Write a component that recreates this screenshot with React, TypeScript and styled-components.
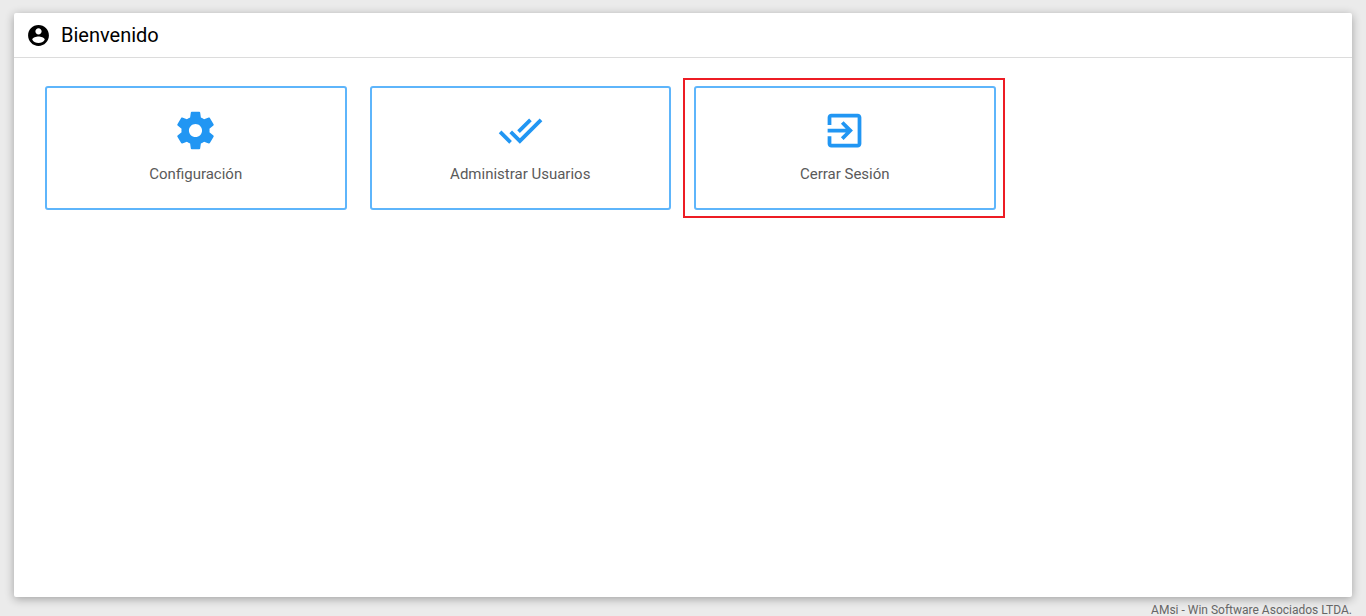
import React from "react";
import styled, { createGlobalStyle } from "styled-components";

const GlobalStyle = createGlobalStyle`
  *, *::before, *::after { box-sizing: border-box; }
  body {
    margin: 0;
    background: #ebebeb;
    color: #000;
    font-family: Roboto, "Liberation Sans", sans-serif;
  }
`;

const Page = styled.div`
  display: flex;
  flex-direction: column;
  height: 100vh;
  padding: 13px 14px 0;
  overflow: hidden;
`;

const Panel = styled.main`
  flex: 1;
  min-height: 0;
  background: #fff;
  border-radius: 2px;
  box-shadow: 0 2px 10px rgba(0, 0, 0, 0.32);
`;

const PanelHeader = styled.header`
  display: flex;
  align-items: center;
  gap: 10px;
  height: 45px;
  padding: 0 12px;
  border-bottom: 1px solid #dcdcdc;
`;

const Title = styled.h1`
  margin: 0;
  font-size: 20px;
  font-weight: 400;
  line-height: 24px;
`;

const Icon = styled.svg<{ $size: number }>`
  display: block;
  flex: none;
  width: ${({ $size }) => $size}px;
  height: ${({ $size }) => $size}px;
  fill: currentColor;
`;

const CardGrid = styled.nav`
  display: grid;
  grid-template-columns: repeat(4, 1fr);
  padding: 20px;
`;

const Cell = styled.div<{ $marked?: boolean }>`
  position: relative;
  padding: 8px 12px 8px 11px;

  &::after {
    content: "";
    display: ${({ $marked }) => ($marked ? "block" : "none")};
    position: absolute;
    inset: 0 3px 0 0;
    border: 2px solid #ed1c24;
    pointer-events: none;
  }
`;

const Card = styled.button`
  display: flex;
  flex-direction: column;
  align-items: center;
  gap: 12px;
  width: 100%;
  height: 124px;
  padding: 20px 8px;
  border: 2px solid #5eb5fb;
  border-radius: 3px;
  background: #fff;
  color: #2196f3;
  font-family: inherit;
  cursor: pointer;
`;

const CardLabel = styled.span`
  color: #5a5a5a;
  font-size: 15px;
  line-height: 18px;
`;

const Footer = styled.footer`
  height: 19px;
  padding-top: 5px;
  color: #666;
  font-size: 12px;
  line-height: 16px;
  text-align: right;
`;

const icons = {
  account:
    "M12 2C6.48 2 2 6.48 2 12s4.48 10 10 10 10-4.48 10-10S17.52 2 12 2zm0 3c1.66 0 3 1.34 3 3s-1.34 3-3 3-3-1.34-3-3 1.34-3 3-3zm0 14.2c-2.5 0-4.71-1.28-6-3.22.03-1.99 4-3.08 6-3.08 1.99 0 5.97 1.09 6 3.08-1.29 1.94-3.5 3.22-6 3.22z",
  settings:
    "M19.43 12.98c.04-.32.07-.64.07-.98s-.03-.66-.07-.98l2.11-1.65c.19-.15.24-.42.12-.64l-2-3.46c-.12-.22-.39-.3-.61-.22l-2.49 1c-.52-.4-1.08-.73-1.69-.98l-.38-2.65C14.46 2.18 14.25 2 14 2h-4c-.25 0-.46.18-.49.42l-.38 2.65c-.61.25-1.17.59-1.69.98l-2.49-1c-.23-.09-.49 0-.61.22l-2 3.46c-.13.22-.07.49.12.64l2.11 1.65c-.04.32-.07.65-.07.98s.03.66.07.98l-2.11 1.65c-.19.15-.24.42-.12.64l2 3.46c.12.22.39.3.61.22l2.49-1c.52.4 1.08.73 1.69.98l.38 2.65c.03.24.24.42.49.42h4c.25 0 .46-.18.49-.42l.38-2.65c.61-.25 1.17-.59 1.69-.98l2.49 1c.23.09.49 0 .61-.22l2-3.46c.12-.22.07-.49-.12-.64l-2.11-1.65zM12 15.5c-1.93 0-3.5-1.57-3.5-3.5s1.57-3.5 3.5-3.5 3.5 1.57 3.5 3.5-1.57 3.5-3.5 3.5z",
  doneAll:
    "M18 7l-1.41-1.41-6.34 6.34 1.41 1.41L18 7zm4.24-1.41L11.66 16.17 7.48 12l-1.41 1.41L11.66 19l12-12-1.42-1.41zM.41 13.41L6 19l1.41-1.41L1.83 12 .41 13.41z",
  exit: "M10.09 15.59L11.5 17l5-5-5-5-1.41 1.41L12.67 11H3v2h9.67l-2.58 2.59zM19 3H5c-1.11 0-2 .9-2 2v4h2V5h14v14H5v-4H3v4c0 1.1.89 2 2 2h14c1.1 0 2-.9 2-2V5c0-1.1-.9-2-2-2z",
};

type IconName = keyof typeof icons;

const MaterialIcon = ({ name, size }: { name: IconName; size: number }) => (
  <Icon $size={size} viewBox="0 0 24 24" aria-hidden="true">
    <path d={icons[name]} />
  </Icon>
);

const actions: { label: string; icon: IconName; marked?: boolean }[] = [
  { label: "Configuración", icon: "settings" },
  { label: "Administrar Usuarios", icon: "doneAll" },
  { label: "Cerrar Sesión", icon: "exit", marked: true },
];

export default function App() {
  return (
    <>
      <GlobalStyle />
      <Page>
        <Panel>
          <PanelHeader>
            <MaterialIcon name="account" size={25} />
            <Title>Bienvenido</Title>
          </PanelHeader>
          <CardGrid>
            {actions.map(({ label, icon, marked }) => (
              <Cell key={label} $marked={marked}>
                <Card type="button">
                  <MaterialIcon name={icon} size={45} />
                  <CardLabel>{label}</CardLabel>
                </Card>
              </Cell>
            ))}
          </CardGrid>
        </Panel>
        <Footer>AMsi - Win Software Asociados LTDA.</Footer>
      </Page>
    </>
  );
}
